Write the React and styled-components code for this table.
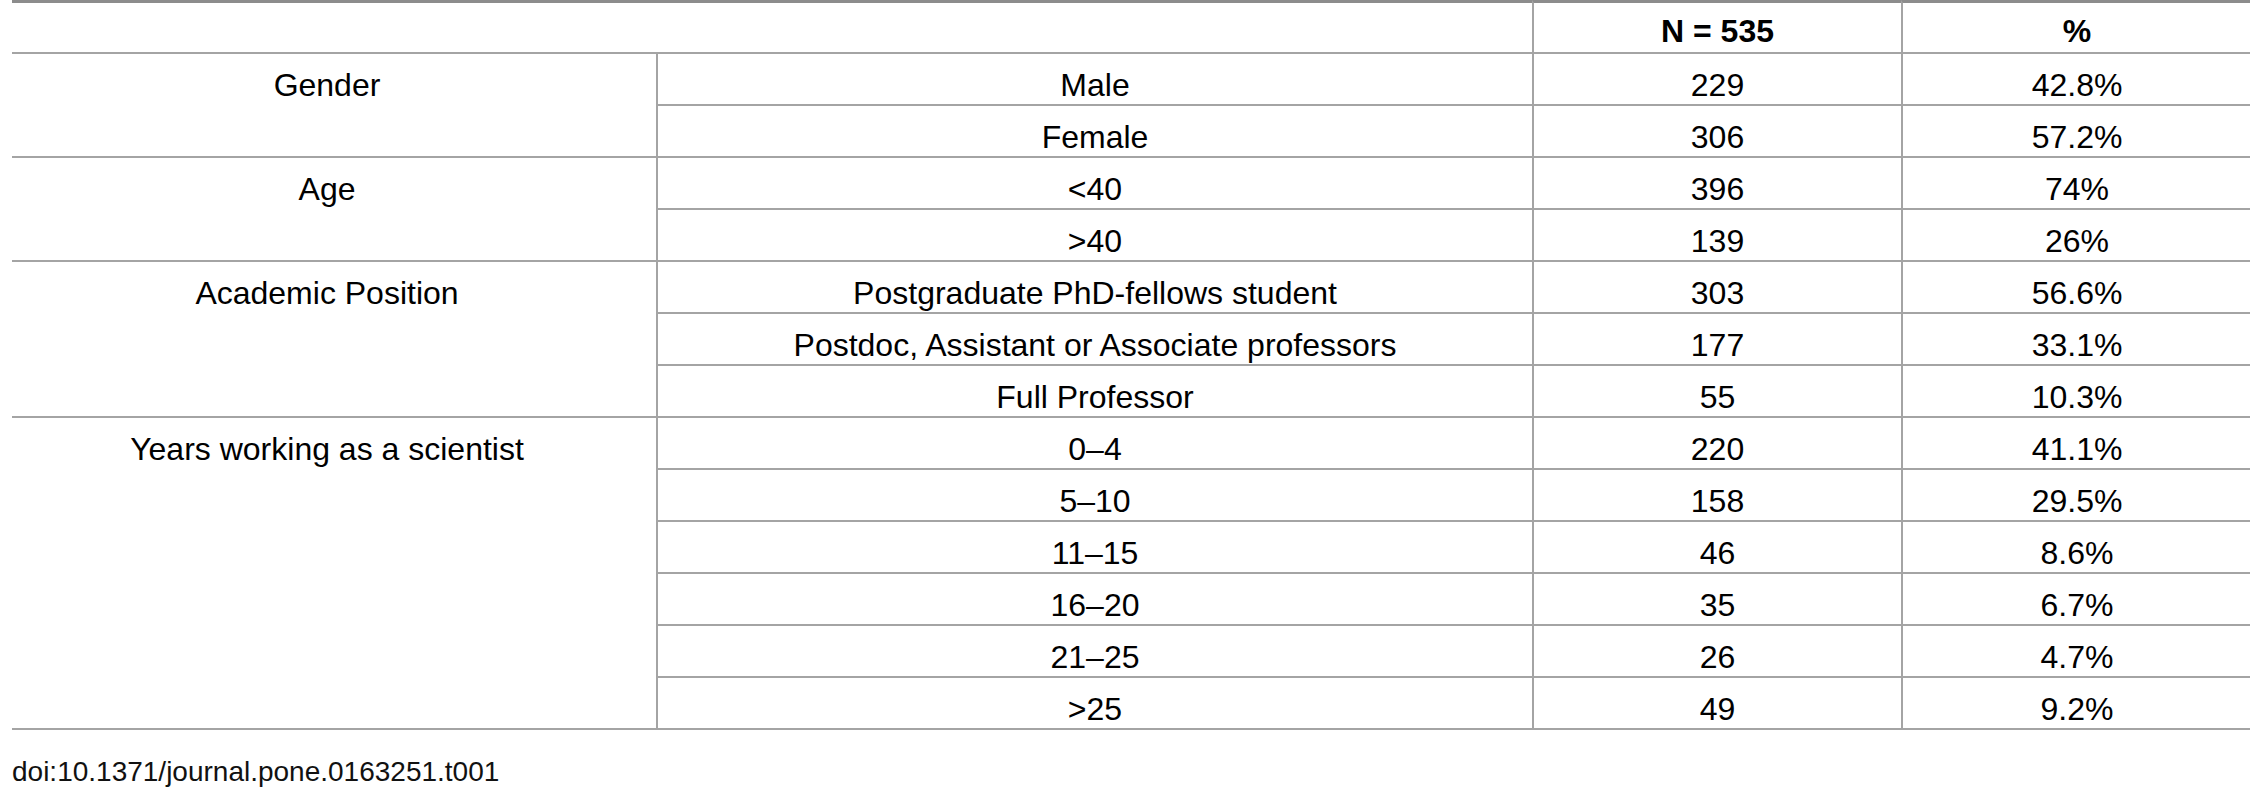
import React from 'react';
import styled, { createGlobalStyle } from 'styled-components';

const GlobalStyle = createGlobalStyle`
  html, body {
    margin: 0;
    padding: 0;
    background: #ffffff;
    overflow: hidden;
  }
  body {
    font-family: "Liberation Sans", Arial, Helvetica, sans-serif;
    color: #000;
  }
`;

const Page = styled.div`
  width: 2250px;
  padding-left: 12px;
  box-sizing: border-box;
`;

const Table = styled.table`
  width: 2239px;
  table-layout: fixed;
  border-collapse: separate;
  border-spacing: 0;
  font-size: 32px;
  line-height: 32px;
`;

const HeadCell = styled.th`
  font-weight: bold;
  text-align: center;
  padding: 12px 0 5px;
  border-top: 3px solid #8c8c8c;
  border-bottom: 2px solid #a4a4a4;
  border-left: ${(p) => (p.$divided ? '2px solid #a4a4a4' : 'none')};
`;

const GroupCell = styled.td`
  vertical-align: top;
  text-align: center;
  padding: 15px 14px 3px 0;
  border-bottom: 2px solid #a4a4a4;
`;

const Cell = styled.td`
  text-align: center;
  white-space: nowrap;
  padding: 15px 0 3px;
  border-left: 2px solid #a4a4a4;
  border-bottom: 2px solid #a4a4a4;
`;

const Caption = styled.div`
  margin-top: 26px;
  font-size: 28px;
  line-height: 32px;
  color: #111;
`;

const groups = [
  {
    label: 'Gender',
    rows: [
      ['Male', '229', '42.8%'],
      ['Female', '306', '57.2%'],
    ],
  },
  {
    label: 'Age',
    rows: [
      ['<40', '396', '74%'],
      ['>40', '139', '26%'],
    ],
  },
  {
    label: 'Academic Position',
    rows: [
      ['Postgraduate PhD-fellows student', '303', '56.6%'],
      ['Postdoc, Assistant or Associate professors', '177', '33.1%'],
      ['Full Professor', '55', '10.3%'],
    ],
  },
  {
    label: 'Years working as a scientist',
    rows: [
      ['0–4', '220', '41.1%'],
      ['5–10', '158', '29.5%'],
      ['11–15', '46', '8.6%'],
      ['16–20', '35', '6.7%'],
      ['21–25', '26', '4.7%'],
      ['>25', '49', '9.2%'],
    ],
  },
];

const App = () => {
  return (
    <Page>
      <GlobalStyle />
      <Table>
        <colgroup>
          <col style={{ width: 644 }} />
          <col style={{ width: 876 }} />
          <col style={{ width: 369 }} />
          <col style={{ width: 350 }} />
        </colgroup>
        <thead>
          <tr>
            <HeadCell colSpan={2}>&nbsp;</HeadCell>
            <HeadCell $divided>N = 535</HeadCell>
            <HeadCell $divided>%</HeadCell>
          </tr>
        </thead>
        <tbody>
          {groups.map((group) =>
            group.rows.map((row, i) => (
              <tr key={group.label + row[0]}>
                {i === 0 && (
                  <GroupCell rowSpan={group.rows.length}>{group.label}</GroupCell>
                )}
                <Cell>{row[0]}</Cell>
                <Cell>{row[1]}</Cell>
                <Cell>{row[2]}</Cell>
              </tr>
            ))
          )}
        </tbody>
      </Table>
      <Caption>doi:10.1371/journal.pone.0163251.t001</Caption>
    </Page>
  );
};

export default App;
